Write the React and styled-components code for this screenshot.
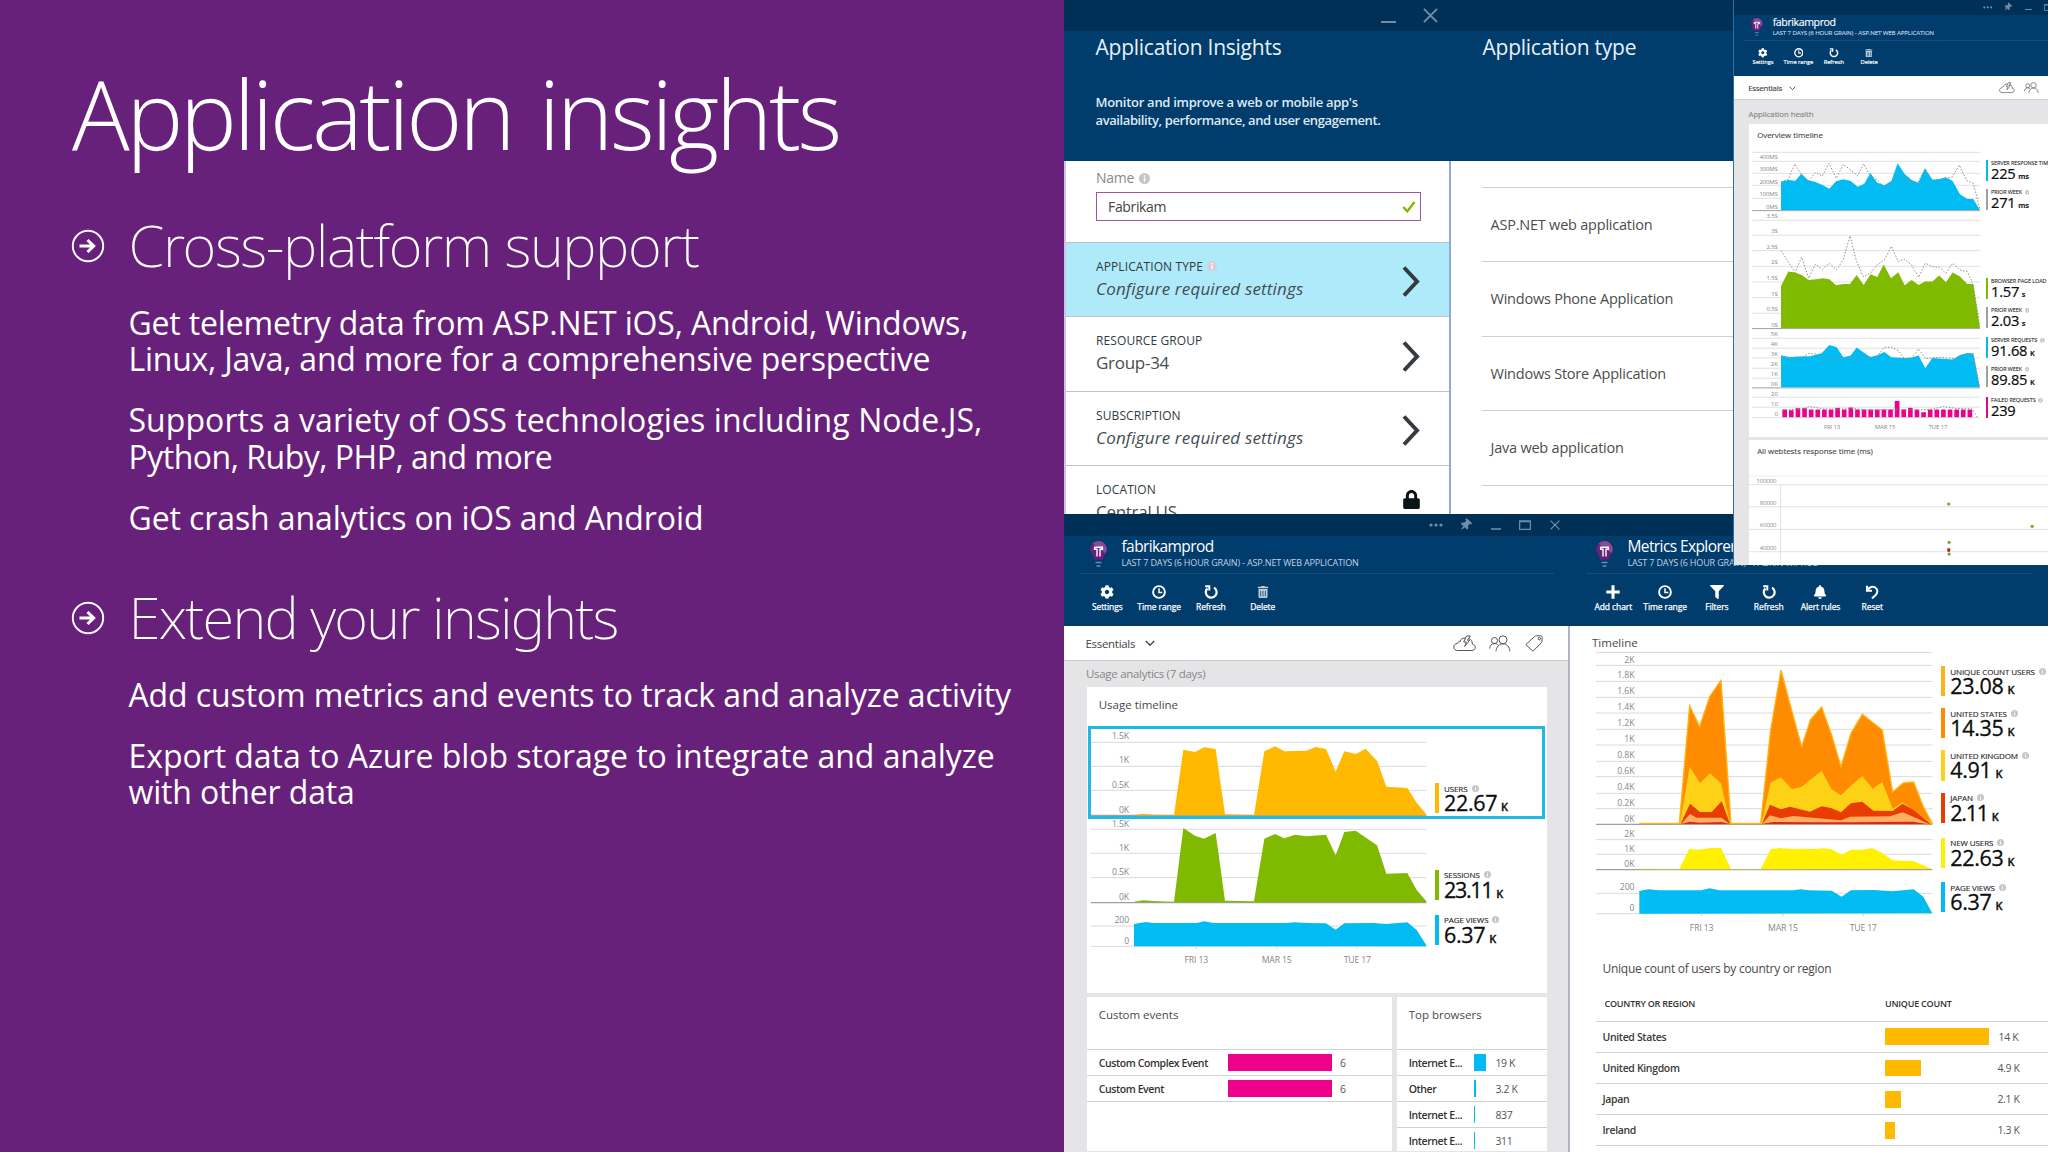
import styled, { createGlobalStyle, css } from "styled-components";
import { FaBell, FaCog, FaFilter, FaLock, FaThumbtack, FaTrashAlt } from "react-icons/fa";

const SANS = `"Open Sans", "Noto Sans", sans-serif`;

const c = {
  purple: "#68217a",
  bar: "#003056",
  header: "#003c6c",
  control: "#6f8ca8",
  amber: "#ffb900",
  green: "#7fba00",
  cyan: "#00bcf2",
  pink: "#ec008c",
  gray: "#a0a0a0",
  body: "#e5e5e7",
  line: "#d2d2d2",
};

/* ---------- data ---------- */

const slideSections = [
  {
    title: "Cross-platform support",
    track: -1.4,
    items: [
      [
        { text: "Get telemetry data from ASP.NET iOS, Android, Windows,", track: -0.18 },
        { text: "Linux, Java, and more for a comprehensive perspective", track: -0.25 },
      ],
      [
        { text: "Supports a variety of OSS technologies including Node.JS,", track: 0.07 },
        { text: "Python, Ruby, PHP, and more", track: -0.5 },
      ],
      [{ text: "Get crash analytics on iOS and Android", track: -0.1 }],
    ],
  },
  {
    title: "Extend your insights",
    track: -1.75,
    items: [
      [{ text: "Add custom metrics and events to track and analyze activity", track: -0.11 }],
      [
        { text: "Export data to Azure blob storage to integrate and analyze", track: -0.05 },
        { text: "with other data", track: -0.15 },
      ],
    ],
  },
];

const settings = [
  { label: "APPLICATION TYPE", value: "Configure required settings", italic: true, active: true, info: true },
  { label: "RESOURCE GROUP", value: "Group-34" },
  { label: "SUBSCRIPTION", value: "Configure required settings", italic: true },
  { label: "LOCATION", value: "Central US", locked: true },
];

const appTypes = [
  "ASP.NET web application",
  "Windows Phone Application",
  "Windows Store Application",
  "Java web application",
  "",
];

const pageViews =
  "222,342 258,336 280,339 410,339 433,334 460,339 680,339 705,337 740,339 798,340 827,359 853,340 940,339 979,342 1042,337 1070,360 1099,406 1099,409 222,409";

const usagePlots = [
  {
    y: 0,
    lines: [[712, "1.5K", 703], [784, "1K", 775], [856, "0.5K", 848], [931, "0K", 923]],
    dark: true,
    areas: [{
      fill: c.amber,
      points: "222,931 222,930 250,926 280,929 342,930 370,734 405,741 432,727 467,732 495,928 582,930 613,739 645,724 673,739 740,737 766,726 798,732 827,800 853,739 888,747 917,731 952,769 979,845 1042,849 1070,893 1099,928 1099,931",
    }],
  },
  {
    y: 915,
    lines: [[58, "1.5K", 50], [130, "1K", 122], [203, "0.5K", 195], [278, "0K", 270]],
    dark: true,
    areas: [{
      fill: c.green,
      points: "222,277 222,275 250,271 280,273 342,275 370,54 405,77 432,86 467,69 495,272 582,274 613,86 645,72 673,85 705,74 740,79 798,74 827,136 853,66 887,62 951,106 979,191 1042,189 1070,240 1099,274 1099,277",
    }],
  },
  {
    y: 915,
    lines: [[348, "200", 340], [409, "0", 402]],
    areas: [{ fill: c.cyan, points: pageViews }],
    ticks: [[409, "FRI 13"], [650, "MAR 15"], [892, "TUE 17"]],
  },
];

const metricPlots = [
  {
    y: 0,
    lines: [
      [457], [496, "2K", 488], [544, "1.8K", 535], [592, "1.6K", 583], [639, "1.4K", 631], [688, "1.2K", 679],
      [735, "1K", 727], [784, "0.8K", 775], [830, "0.6K", 822], [880, "0.4K", 871], [926, "0.2K", 918], [973, "0K", 967],
    ],
    dark: true,
    areas: [
      {
        fill: "#ff8c00",
        stroke: "#fdb515",
        points: "238,970 358,970 389,617 419,680 449,590 483,541 513,970 602,970 632,690 663,510 690,612 725,740 752,658 785,621 815,705 843,800 873,700 907,643 967,690 998,876 1030,849 1061,846 1090,920 1117,971",
      },
      {
        fill: "#fcd116",
        points: "360,971 389,800 420,850 450,820 483,850 511,971 604,971 632,848 663,832 696,868 725,860 785,812 815,868 843,886 875,855 907,828 938,866 967,846 998,926 1028,907 1117,971",
      },
      {
        fill: "#e83c00",
        points: "362,971 390,911 420,936 455,936 485,904 510,971 606,971 630,914 663,928 690,920 750,935 785,919 815,925 843,937 873,910 907,905 940,932 998,933 1028,911 1061,930 1112,971",
      },
      {
        fill: "#ffaf62",
        points: "364,971 390,942 410,953 485,953 508,971 606,971 630,946 663,955 700,948 843,961 870,950 990,949 1028,937 1070,955 1105,971",
      },
      {
        fill: "#dc2626",
        points: "364,972 390,965 420,968 485,966 508,972 606,972 640,966 750,967 870,967 1060,965 1100,972",
      },
    ],
  },
  {
    y: 900,
    lines: [[119, "2K", 111], [163, "1K", 155], [209, "0K", 201]],
    dark: true,
    areas: [{
      fill: "#fff100",
      points: "238,208 238,206 358,207 388,146 415,149 452,144 483,144 513,207 602,207 632,148 660,144 690,147 720,146 765,147 790,145 815,148 845,164 873,149 907,149 937,144 965,158 998,181 1061,184 1090,196 1117,207",
    }],
  },
  {
    y: 900,
    lines: [[280, "200", 271], [341, "0", 333]],
    areas: [{
      fill: c.cyan,
      points: "238,273 265,268 295,271 425,271 449,265 478,271 700,271 722,268 745,271 815,272 845,290 873,271 940,270 998,274 1061,268 1090,290 1117,340 238,341",
    }],
    ticks: [[425, "FRI 13"], [669, "MAR 15"], [910, "TUE 17"]],
  },
];

const failedTops = { 1: 541, 2: 535, 3: 535, 8: 534, 10: 533, 17: 513, 19: 534, 21: 547 };
const failedBars = Array.from({ length: 29 }, (_, i) => ({ x: 157 + i * 19.85, y: failedTops[i] || 539 }));

const healthPlots = [
  {
    y: 0,
    lines: [[457], [484, "400MS", 477], [520, "300MS", 514], [556, "200MS", 551], [595, "100MS", 589], [632, "0MS", 627]],
    dark: true,
    areas: [{
      fill: c.cyan,
      points: "153,545 175,540 196,542 214,521 235,541 256,546 276,554 298,566 318,544 340,538 362,543 383,560 403,551 421,519 442,548 463,556 484,543 503,490 524,522 545,540 565,548 585,505 607,539 628,537 648,532 668,543 690,583 712,597 730,597 750,630 153,630",
    }],
    dotted: "153,546 175,538 194,492 215,525 235,545 256,518 277,528 297,490 319,535 340,493 362,510 383,527 401,491 421,530 442,540 463,560 484,548 503,522 524,538 545,550 565,545 585,507 607,540 628,540 668,530 688,495 710,542 730,550 750,628",
  },
  {
    y: 690,
    lines: [
      [-29, "3.5S", -35], [16, "3S", 10], [62, "2.5S", 58], [109, "2S", 103], [156, "1.5S", 150],
      [203, "1S", 197], [250, "0.5S", 243], [296, "0S", 291],
    ],
    dark: true,
    areas: [{
      fill: c.green,
      points: "153,168 175,125 195,128 215,135 236,150 258,148 279,145 298,148 318,166 340,162 360,162 380,135 401,165 422,133 442,141 461,104 483,145 505,127 524,166 545,150 566,165 585,155 607,155 628,137 648,157 668,128 690,140 712,162 730,162 750,294 153,294",
    }],
    dotted: "153,62 175,95 195,128 215,82 236,145 256,103 277,118 297,100 320,120 340,88 360,18 380,95 400,140 421,130 442,105 463,90 484,49 505,95 522,87 545,105 566,142 586,100 607,110 628,112 648,130 668,100 690,120 712,125 730,165 750,290",
  },
  {
    y: 690,
    lines: [[325, "5K", 318], [355, "4K", 348], [384, "3K", 378], [415, "2K", 408], [445, "1K", 438], [474, "0K", 469]],
    dark: true,
    areas: [{
      fill: c.cyan,
      points: "153,376 178,382 200,380 240,379 275,370 298,345 320,352 340,382 362,377 380,353 401,368 422,382 442,376 463,366 484,382 524,384 545,383 566,377 586,415 607,384 668,389 690,375 712,369 730,371 750,472 153,472",
    }],
    dotted: "153,380 215,384 236,371 258,372 279,386 360,386 401,385 442,378 463,352 484,352 505,362 524,388 545,385 566,357 586,386 628,382 690,388 712,372 730,371 748,470",
  },
  {
    y: 690,
    lines: [[502, "20", 497], [532, "10", 527], [563, "0", 558]],
    bars: failedBars,
    dotted: "157,540 215,538 240,530 280,537 330,538 370,536 420,541 500,538 560,541 610,537 640,530 680,536 727,537 742,562",
    ticks: [[306, "FRI 13"], [465, "MAR 15"], [624, "TUE 17"]],
  },
];

const usageMetrics = [
  { gap: 57, color: c.amber, label: "USERS", value: "22.67", unit: "K" },
  { gap: 56.7, color: c.green, label: "SESSIONS", value: "23.11", unit: "K", tight: true },
  { gap: 14.6, color: c.cyan, label: "PAGE VIEWS", value: "6.37", unit: "K" },
];

const explorerMetrics = [
  { gap: 16, color: "#fdb515", label: "UNIQUE COUNT USERS", value: "23.08", unit: "K" },
  { gap: 11.9, color: "#ff8c00", label: "UNITED STATES", value: "14.35", unit: "K" },
  { gap: 11.9, color: "#fcd116", label: "UNITED KINGDOM", value: "4.91", unit: "K" },
  { gap: 11.9, color: "#e83c00", label: "JAPAN", value: "2.11", unit: "K", tight: true },
  { gap: 15, color: "#fff100", label: "NEW USERS", value: "22.63", unit: "K" },
  { gap: 14, color: c.cyan, label: "PAGE VIEWS", value: "6.37", unit: "K" },
];

const healthMetrics = [
  { gap: 14.6, color: c.cyan, label: "SERVER RESPONSE TIME", value: "225", unit: "ms" },
  { gap: 12.2, color: c.gray, label: "PRIOR WEEK", value: "271", unit: "ms" },
  { gap: 100, color: c.green, label: "BROWSER PAGE LOAD", value: "1.57", unit: "s" },
  { gap: 12.2, color: c.gray, label: "PRIOR WEEK", value: "2.03", unit: "s" },
  { gap: 14, color: c.cyan, label: "SERVER REQUESTS", value: "91.68", unit: "K" },
  { gap: 12, color: c.gray, label: "PRIOR WEEK", value: "89.85", unit: "K" },
  { gap: 14.5, color: c.pink, label: "FAILED REQUESTS", value: "239" },
];

const customEvents = [
  { name: "Custom Complex Event", bar: 103.7, value: "6" },
  { name: "Custom Event", bar: 103.7, value: "6" },
];

const browsers = [
  { name: "Internet E...", bar: 12, value: "19 K" },
  { name: "Other", bar: 1.6, value: "3.2 K" },
  { name: "Internet E...", bar: 1, value: "837" },
  { name: "Internet E...", bar: 1, value: "311" },
];

const countries = [
  { name: "United States", bar: 103.7, value: "14 K" },
  { name: "United Kingdom", bar: 35.7, value: "4.9 K" },
  { name: "Japan", bar: 15.7, value: "2.1 K" },
  { name: "Ireland", bar: 9.7, value: "1.3 K" },
];

/* ---------- icons ---------- */

const ArrowBullet = () => (
  <svg width="34" height="34" viewBox="0 0 34 34" fill="none" stroke="#fff">
    <circle cx="17" cy="17" r="15.2" strokeWidth="1.9" />
    <path d="M8.5 17h14.5M16.500 11l6.200 6-6.200 6" strokeWidth="3" />
  </svg>
);

const Bulb = () => (
  <svg width="17" height="27" viewBox="0 0 17 27">
    <path d="M8.500 0a8.300 8.300 0 0 1 8.300 8.300c0 3.800-3.300 6-3.900 10.200H4.100C3.500 14.300.2 12.100.2 8.300A8.300 8.300 0 0 1 8.500 0z" fill="#68217a" />
    <path d="M8.500 0a8.300 8.300 0 0 1 8.300 8.300c0 1.500-.5 2.700-1.200 3.900L2.500 2.600A8.300 8.300 0 0 1 8.500 0z" fill="#8a4a99" />
    <path d="M7 15.500V8.200H4.600V6.300h7.800v1.900H10v7.300" fill="none" stroke="#fff" strokeWidth="1.400" />
    <path d="M5.500 21.500h6M6.500 25h4" stroke="#6f8ca8" strokeWidth="1.300" />
  </svg>
);

const Clock = () => (
  <svg viewBox="0 0 14 14" fill="none" stroke="#fff">
    <circle cx="7" cy="7" r="5.900" strokeWidth="1.900" />
    <path d="M7 3.200V7.500h3.400" strokeWidth="1.500" />
  </svg>
);

const Refresh = () => (
  <svg viewBox="0 0 14 14" fill="none" stroke="#fff">
    <path d="M10 2.600A5.400 5.400 0 1 1 3.400 3.400" strokeWidth="2.200" />
    <path d="M1.200 1.200H5.300V5.600" strokeWidth="2" />
  </svg>
);

const Reset = () => (
  <svg viewBox="0 0 14 14" fill="none" stroke="#fff" strokeWidth="2.100">
    <path d="M2 0.800V5.800H7" />
    <path d="M2.300 5.200C4.500 1.600 8 1 10.200 2.500c3 2.100 2.800 5.800-.2 8.300L7 13.400" />
  </svg>
);

const Plus = () => (
  <svg viewBox="0 0 14 14" stroke="#fff" strokeWidth="3">
    <path d="M7 .3v13.400M.3 7h13.400" />
  </svg>
);

const Chevron = () => (
  <svg width="19" height="31" viewBox="0 0 19 31" fill="none" stroke="#353b40" strokeWidth="4">
    <path d="M2 1.500l13 14-13 14" />
  </svg>
);

const ChevronDown = () => (
  <svg width="10" height="7" viewBox="0 0 10 7" fill="none" stroke="#444" strokeWidth="1.300">
    <path d="M.8 1l4.200 4.300L9.200 1" />
  </svg>
);

const Check = () => (
  <svg width="14" height="12" viewBox="0 0 14 12" fill="none" stroke="#85b800" strokeWidth="2.400">
    <path d="M1.300 6l4 4.300L12.500 1" />
  </svg>
);

const CloudBolt = () => (
  <svg width="23" height="17" viewBox="0 0 23 17" fill="none" stroke="#555" strokeWidth="1">
    <path d="M4.500 15.500h14.300c2.200 0 3.500-1.500 3.500-3.200 0-1.800-1.200-3-3-3.100.2-3-1.300-5-3.500-5.800M12.500 3.300C9.800 2.500 7.500 4 7 6.800 5.800 6.300 4.700 7 4.600 8.400 2.200 8.500.8 10 .8 12c0 2 1.500 3.500 3.700 3.500" />
    <path d="M13.500 1l-2.800 6h2.700l-1.700 4.500 5-6.300h-2.400L17.500 1z" />
  </svg>
);

const People = () => (
  <svg width="22" height="17" viewBox="0 0 22 17" fill="none" stroke="#555" strokeWidth="1">
    <circle cx="5.500" cy="5.500" r="3" />
    <circle cx="14" cy="4.800" r="4" />
    <path d="M.6 13.500c.3-3 2-5 4.900-5 1.600 0 2.700.6 3.500 1.700M7 16.300c.3-4.300 2.900-7.500 7-7.500s6.500 3.200 6.800 7.500" />
  </svg>
);

const Tag = () => (
  <svg width="18" height="17" viewBox="0 0 18 17" fill="none" stroke="#555" strokeWidth="1">
    <path d="M.9 9.600L9.700 1.400c.5-.4 1-.6 1.600-.6h4.500c.9 0 1.500.7 1.400 1.600l-.3 4c0 .5-.3 1-.6 1.400L8 16.200z" />
    <circle cx="14.300" cy="3.600" r="1.200" />
  </svg>
);

const CloseIcon = ({ size }) => (
  <svg width={size} height={size} viewBox="0 0 10 10" stroke={c.control} strokeWidth="1.300">
    <path d="M.6.6l8.800 8.800M9.400.6L.6 9.400" />
  </svg>
);

/* ---------- charts ---------- */

const ChartStack = ({ plots, viewBox, width, height, from, to, labelX, font, pen }) => (
  <Plot width={width} height={height} viewBox={viewBox}>
    {plots.map((p, i) => (
      <g key={i} transform={`translate(0 ${p.y})`}>
        {p.lines.map(([y, label, ly], n) => (
          <g key={y}>
            <path
              d={`M${from} ${y}H${to}`}
              stroke={p.dark && n === p.lines.length - 1 ? "#a0a0a0" : "#d0d0d0"}
              strokeWidth={p.dark && n === p.lines.length - 1 ? pen * 1.5 : pen}
            />
            {label && <text x={labelX} y={ly} fontSize={font} textAnchor="end">{label}</text>}
          </g>
        ))}
        {p.areas?.map((a) => (
          <polygon key={a.fill} points={a.points} fill={a.fill} stroke={a.stroke || "none"} strokeWidth="4" />
        ))}
        {p.bars?.map((b) => (
          <rect key={b.x} x={b.x} y={b.y} width="14" height={562 - b.y} fill={c.pink} />
        ))}
        {p.dotted && <polyline points={p.dotted} fill="none" stroke="#8f8f8f" strokeWidth="3" strokeDasharray="4.500 5" />}
        {p.ticks?.map(([x, label]) => {
          const base = p.lines[p.lines.length - 1][0];
          return (
            <g key={label}>
              <path d={`M${x} ${base}v${font * 0.3}`} stroke="#c4c4c4" strokeWidth={pen} />
              <text x={x} y={base + font * 1.98} fontSize={font} textAnchor="middle">{label}</text>
            </g>
          );
        })}
      </g>
    ))}
  </Plot>
);

const WebtestScatter = () => (
  <Plot width="438" height="147" viewBox="57 710 897 301">
    <path d="M57 737H954" stroke="#e6e6e6" strokeWidth="2" />
    {[[763, "100000"], [829, "80000"], [897, "60000"], [964, "40000"]].map(([y, label]) => (
      <g key={y}>
        <path d={`M57 ${y}H954`} stroke="#d3d3d3" strokeWidth="2" />
        <text x="139" y={y - 6} fontSize="18" textAnchor="end">{label}</text>
      </g>
    ))}
    <path d="M152 763V1011" stroke="#d3d3d3" strokeWidth="2" />
    {[[656, 821], [906, 888], [657, 936], [657, 971]].map(([x, y]) => (
      <circle key={y} cx={x} cy={y} r="4.800" fill="#76a91d" />
    ))}
    <ellipse cx="656" cy="959" rx="5" ry="6" fill="#d0103a" />
  </Plot>
);

const InfoDot = ({ size = 7, tone = "#c6c6c8" }) => (
  <svg width={size} height={size} viewBox="0 0 10 10">
    <circle cx="5" cy="5" r="5" fill={tone} />
    <path d="M5 4.200V8M5 2v1.400" stroke="#fff" strokeWidth="1.300" />
  </svg>
);

const MetricList = ({ items }) => (
  <Metrics>
    {items.map((m, i) => (
      <Metric key={i} $gap={m.gap} $color={m.color}>
        <MetricLabel>{m.label}<InfoDot /></MetricLabel>
        <MetricValue $tight={m.tight}>{m.value}<Unit>{m.unit}</Unit></MetricValue>
      </Metric>
    ))}
  </Metrics>
);

/* ---------- blades ---------- */

const BladeTop = ({ title, subtitle, tools, controls }) => (
  <>
    <TitleBar>
      {controls && (
        <>
          <Control><svg width="14" height="4" viewBox="0 0 14 4" fill={c.control}><circle cx="2" cy="2" r="1.600" /><circle cx="7" cy="2" r="1.600" /><circle cx="12" cy="2" r="1.600" /></svg></Control>
          <Control><Pin /></Control>
          <Control><svg width="10" height="9" viewBox="0 0 10 9"><path d="M0 8h10" stroke={c.control} strokeWidth="1.500" /></svg></Control>
          <Control><svg width="12" height="10" viewBox="0 0 12 10"><path d="M.6 1h10.800v8.400H.6zM0 1.500h12" fill="none" stroke={c.control} strokeWidth="1.300" /></svg></Control>
          <Control><CloseIcon size={10} /></Control>
        </>
      )}
    </TitleBar>
    <Header>
      <TitleRow>
        <Bulb />
        <div>
          <BladeTitle>{title}</BladeTitle>
          <BladeSubtitle>{subtitle}</BladeSubtitle>
        </div>
      </TitleRow>
      <Toolbar>
        {tools.map(([label, icon, dim]) => (
          <Tool key={label} $dim={dim}>{icon}{label}</Tool>
        ))}
      </Toolbar>
    </Header>
  </>
);

const appTools = [
  ["Settings", <FaCog />],
  ["Time range", <Clock />],
  ["Refresh", <Refresh />],
  ["Delete", <FaTrashAlt />, true],
];

const explorerTools = [
  ["Add chart", <Plus />],
  ["Time range", <Clock />],
  ["Filters", <FaFilter />],
  ["Refresh", <Refresh />],
  ["Alert rules", <FaBell />],
  ["Reset", <Reset />],
];

const EssentialsBar = () => (
  <Essentials>
    Essentials
    <ChevronDown />
    <EssentialsIcons><CloudBolt /><People /><Tag /></EssentialsIcons>
  </Essentials>
);

const AppBlade = ({ section, roomy, children }) => (
  <Blade>
    <BladeTop
      controls
      title="fabrikamprod"
      subtitle="LAST 7 DAYS (6 HOUR GRAIN) - ASP.NET WEB APPLICATION"
      tools={appTools}
    />
    <BladeBody>
      <EssentialsBar />
      <SectionLabel $roomy={roomy}>{section}</SectionLabel>
      {children}
    </BladeBody>
  </Blade>
);

const BarTable = ({ rows, color, nameWidth, barWidth, pad }) => (
  <div>
    {rows.map((r, i) => (
      <BarRow key={i} $name={nameWidth} $bar={barWidth} $pad={pad}>
        <b>{r.name}</b>
        <Bar $color={color} $width={r.bar} />
        <span>{r.value}</span>
      </BarRow>
    ))}
  </div>
);

const App = () => {
  return (
    <Page>
      <GlobalStyle />
      <Slide>
        <SlideTitle>Application insights</SlideTitle>
        {slideSections.map((s) => (
          <SlideSection key={s.title}>
            <ArrowBullet />
            <SlideHeading $track={s.track}>{s.title}</SlideHeading>
            {s.items.map((lines) => (
              <SlideText key={lines[0].text}>
                {lines.map((l) => <SlideLine key={l.text} $track={l.track}>{l.text}</SlideLine>)}
              </SlideText>
            ))}
          </SlideSection>
        ))}
      </Slide>

      <Shots>
        <CreatePane>
          <CreateBlade>
            <CreateBar>
              <svg width="15" height="14" viewBox="0 0 15 14"><path d="M0 13h15" stroke={c.control} strokeWidth="2" /></svg>
              <CloseIcon size={15} />
            </CreateBar>
            <CreateHeader>
              <CreateTitle>Application Insights</CreateTitle>
              <Description>Monitor and improve a web or mobile app's</Description>
              <Description $tight>availability, performance, and user engagement.</Description>
            </CreateHeader>
            <Form>
              <NameField>
                <FieldLabel>Name<InfoDot size={11} /></FieldLabel>
                <NameInput>Fabrikam<Check /></NameInput>
              </NameField>
              {settings.map((s) => (
                <Setting key={s.label} $active={s.active}>
                  <div>
                    <SettingLabel>{s.label}{s.info && <InfoDot size={10} tone="#d9cdd8" />}</SettingLabel>
                    <SettingValue $italic={s.italic}>{s.value}</SettingValue>
                  </div>
                  {s.locked ? <Lock /> : <Chevron />}
                </Setting>
              ))}
            </Form>
          </CreateBlade>
          <TypeBlade>
            <CreateBar />
            <CreateHeader>
              <CreateTitle>Application type</CreateTitle>
            </CreateHeader>
            <TypeList>
              {appTypes.map((t) => <TypeItem key={t}>{t}</TypeItem>)}
            </TypeList>
          </TypeBlade>
        </CreatePane>

        <Dashboard>
          <AppBlade section="Usage analytics (7 days)">
            <Card $height={306}>
              <CardTitle>Usage timeline</CardTitle>
              <ChartRow $left={3}>
                <ChartStack plots={usagePlots} viewBox="90 663 1011 771" width="337" height="257" from={92} to={1099} labelX={207} font={26} pen={2.4} />
                <MetricList items={usageMetrics} />
                <Selection />
              </ChartRow>
            </Card>
            <CardRow>
              <Card $width={305} $height={153.5}>
                <CardTitle $tall>Custom events</CardTitle>
                <BarTable rows={customEvents} color={c.pink} nameWidth={129.3} barWidth={112} pad={11.7} />
              </Card>
              <Card $width={150} $height={153.5}>
                <CardTitle $tall>Top browsers</CardTitle>
                <BarTable rows={browsers} color={c.cyan} nameWidth={65.3} barWidth={21.500} pad={11.7} />
              </Card>
            </CardRow>
          </AppBlade>

          <ExplorerBlade>
            <BladeTop
              title="Metrics Explorer"
              subtitle="LAST 7 DAYS (6 HOUR GRAIN) - FABRIKAMPROD"
              tools={explorerTools}
            />
            <ExplorerBody>
              <ExplorerTitle>Timeline</ExplorerTitle>
              <ChartRow $left={26}>
                <ChartStack plots={metricPlots} viewBox="108 450 1012 870" width="337.3" height="290" from={108} to={1117} labelX={223} font={26} pen={2.4} />
                <MetricList items={explorerMetrics} />
              </ChartRow>
              <RegionTitle>Unique count of users by country or region</RegionTitle>
              <RegionTable>
                <RegionHead><span>COUNTRY OR REGION</span><span>UNIQUE COUNT</span></RegionHead>
                {countries.map((r) => (
                  <RegionRow key={r.name}>
                    <b>{r.name}</b>
                    <Bar $color={c.amber} $width={r.bar} />
                    <RegionValue>{r.value}</RegionValue>
                  </RegionRow>
                ))}
              </RegionTable>
            </ExplorerBody>
          </ExplorerBlade>
        </Dashboard>

        <HealthWindow>
          <Scaled>
            <AppBlade section="Application health" roomy>
              <Card $height={459.3}>
                <CardTitle>Overview timeline</CardTitle>
                <ChartRow $left={4.4}>
                  <ChartStack plots={healthPlots} viewBox="66 450 684 861" width="333.8" height="420" from={66} to={750} labelX={143} font={18} pen={2} />
                  <MetricList items={healthMetrics} />
                </ChartRow>
              </Card>
              <CardRow>
                <Card $height={200}>
                  <CardTitle>All webtests response time (ms)</CardTitle>
                  <WebtestScatter />
                </Card>
              </CardRow>
            </AppBlade>
          </Scaled>
        </HealthWindow>
      </Shots>
    </Page>
  );
};

export default App;

/* ---------- styles ---------- */

const GlobalStyle = createGlobalStyle`
    * { box-sizing: border-box; }
    body {
        margin: 0;
        font-family: ${SANS};
        overflow: hidden;
    }
    svg { display: block; flex: none; }
`

const Page = styled.div`
    width: 2048px;
    height: 1152px;
    display: flex;
    overflow: hidden;
    background: #fff;
`

const Slide = styled.section`
    width: 1064px;
    padding: 53px 0 0 70.5px;
    background: ${c.purple};
    color: #fff;
    white-space: nowrap;
`

const SlideTitle = styled.h1`
    margin: 0 0 37px 1.5px;
    font-size: 96px;
    font-weight: 300;
    line-height: 120px;
    letter-spacing: -3.5px;
    word-spacing: 5px;
`

const SlideSection = styled.div`
    display: grid;
    grid-template-columns: 58px 1fr;
    align-items: center;
    margin-bottom: 45.5px;

    > p { grid-column: 2; }
    > svg { margin-top: 2px; }
`

const SlideHeading = styled.h2`
    margin: 0;
    font-family: "Noto Sans", ${SANS};
    font-size: 58px;
    font-weight: 200;
    line-height: 70px;
    letter-spacing: ${({ $track }) => $track}px;
`

const SlideText = styled.p`
    margin: 25px 0 0;
    font-size: 32px;
    line-height: 36.2px;
`

const SlideLine = styled.span`
    display: block;
    letter-spacing: ${({ $track }) => $track}px;
`

const Shots = styled.section`
    position: relative;
    width: 984px;
    display: flex;
    flex-direction: column;
    overflow: hidden;
    white-space: nowrap;
`

const CreatePane = styled.div`
    height: 514px;
    display: flex;
    overflow: hidden;
    color: #fff;
`

const CreateBlade = styled.div`
    width: 387px;
`

const TypeBlade = styled.div`
    flex: 1;
`

const CreateBar = styled.div`
    height: 31px;
    display: flex;
    justify-content: flex-end;
    align-items: center;
    gap: 27px;
    padding-right: 13px;
    background: ${c.bar};
`

const CreateHeader = styled.header`
    height: 130px;
    padding: 2px 0 0 31.5px;
    background: ${c.header};
`

const CreateTitle = styled.h3`
    margin: 0 0 33px;
    color: #e8f0f7;
    font-size: 21px;
    font-weight: 400;
    line-height: 28px;
    letter-spacing: -0.25px;
`

const Description = styled.p`
    margin: 0;
    color: #dfe9f2;
    font-size: 13px;
    font-weight: 600;
    line-height: 17.7px;
    letter-spacing: ${({ $tight }) => ($tight ? -0.4 : -0.28)}px;
`

const Form = styled.div`
    height: 353px;
    overflow: hidden;
    background: #fff;
    border-left: 2px solid #c9c6e0;
    border-right: 2px solid #93a9d2;
`

const NameField = styled.div`
    height: 80.5px;
    padding: 7px 0 0 30px;
`

const FieldLabel = styled.div`
    display: flex;
    align-items: center;
    gap: 5px;
    margin-bottom: 4px;
    color: #8a8a8a;
    font-size: 14px;
    line-height: 20px;
    letter-spacing: -0.3px;
`

const NameInput = styled.div`
    width: 325px;
    height: 29px;
    display: flex;
    align-items: center;
    justify-content: space-between;
    padding: 0 4px 0 11px;
    border: 1px solid #a3539f;
    color: #444;
    font-size: 14px;
    letter-spacing: -0.35px;
`

const Setting = styled.div`
    height: 74.5px;
    display: flex;
    justify-content: space-between;
    align-items: flex-start;
    padding: 15px 28px 0 30px;
    border-top: 1.5px solid #bfc3c8;
    background: ${({ $active }) => ($active ? "#aeeaf9" : "#fff")};

    > svg { margin-top: 8.5px; }
`

const SettingLabel = styled.div`
    display: flex;
    align-items: center;
    gap: 4px;
    color: #2f3a40;
    font-size: 12px;
    line-height: 17px;
    letter-spacing: 0.1px;
`

const SettingValue = styled.div`
    color: #454d52;
    font-size: 17px;
    font-style: ${({ $italic }) => ($italic ? "italic" : "normal")};
    line-height: 28.5px;
    letter-spacing: ${({ $italic }) => ($italic ? 0.17 : -0.28)}px;
`

const Lock = styled(FaLock)`
    width: 17px;
    height: 19px;
    margin-right: 1.5px;
    color: #0b1418;
`

const TypeList = styled.div`
    height: 353px;
    padding: 25.5px 0 0 31px;
    overflow: hidden;
    background: #fff;
`

const TypeItem = styled.div`
    height: 74.5px;
    padding-left: 8.5px;
    border-top: 1.5px solid #cfcfcf;
    color: #4d4d4d;
    font-size: 14.5px;
    line-height: 74px;
    letter-spacing: -0.22px;
`

const Dashboard = styled.div`
    flex: 1;
    display: flex;
    overflow: hidden;
`

const HealthWindow = styled.div`
    position: absolute;
    top: 0;
    left: 669px;
    width: 315px;
    height: 564.5px;
    overflow: hidden;
    border-left: 1px solid #2f6ea5;
    background: ${c.body};
`

const Scaled = styled.div`
    zoom: 0.683;
    margin-left: -0.8px;
    -webkit-text-stroke: 0.2px;
`

const Blade = styled.div`
    width: 506px;
    display: flex;
    flex: none;
    flex-direction: column;
`

const ExplorerBlade = styled(Blade)`
    width: 478px;
`

const TitleBar = styled.div`
    height: 22px;
    display: flex;
    justify-content: flex-end;
    background: ${c.bar};
`

const Control = styled.span`
    width: 29.8px;
    display: flex;
    align-items: center;
    justify-content: center;
`

const Pin = styled(FaThumbtack)`
    width: 11px;
    height: 12px;
    color: ${c.control};
    transform: rotate(42deg);
`

const Header = styled.header`
    height: 90px;
    background: ${c.header};
    color: #fff;
`

const TitleRow = styled.div`
    height: 38px;
    display: flex;
    gap: 14.5px;
    margin: 0 16px;
    padding-left: 10px;
    border-bottom: 1px solid #1a4c7a;

    > svg { margin-top: 5px; }
`

const BladeTitle = styled.h3`
    margin: 0;
    font-size: 15.5px;
    font-weight: 400;
    line-height: 21px;
    letter-spacing: -0.6px;
`

const BladeSubtitle = styled.div`
    color: #c3d2e0;
    font-size: 9px;
    line-height: 12px;
    letter-spacing: -0.16px;
`

const Toolbar = styled.div`
    display: flex;
    padding: 10.5px 0 0 17.4px;
`

const Tool = styled.div`
    width: 51.8px;
    display: flex;
    flex-direction: column;
    align-items: center;
    font-size: 8.5px;
    line-height: 13px;
    letter-spacing: -0.1px;
    -webkit-text-stroke: 0.25px #fff;

    svg {
        width: 14px;
        height: 14px;
        margin-bottom: 1px;
        opacity: ${({ $dim }) => ($dim ? 0.75 : 1)};
        ${({ $dim }) => $dim && css`height: 12px; margin: 1px 0 2px;`}
    }
`

const BladeBody = styled.div`
    flex: 1;
    border-right: 2px solid #b3b1cc;
    background: ${c.body};
`

const Essentials = styled.div`
    height: 35px;
    display: flex;
    align-items: center;
    gap: 10px;
    padding: 0 25.5px 0 21.5px;
    border-bottom: 1px solid #cfcfd2;
    background: #fff;
    color: #444;
    font-size: 11.5px;
    letter-spacing: -0.3px;
`

const EssentialsIcons = styled.div`
    display: flex;
    align-items: center;
    gap: 13.5px;
    margin-left: auto;
`

const SectionLabel = styled.div`
    padding: ${({ $roomy }) => ($roomy ? 8 : 0)}px 0 0 22px;
    color: #868686;
    font-size: 11.5px;
    line-height: 26px;
    letter-spacing: ${({ $roomy }) => ($roomy ? -0.1 : -0.3)}px;
`

const Card = styled.div`
    width: ${({ $width }) => $width || 460}px;
    height: ${({ $height }) => $height}px;
    margin-left: 23px;
    background: #fff;
`

const CardRow = styled.div`
    display: flex;
    gap: 5px;
    margin: 4.3px 0 0 23px;

    > ${Card} { margin-left: 0; }
`

const CardTitle = styled.h4`
    height: ${({ $tall }) => ($tall ? 52 : 39)}px;
    margin: 0;
    padding-left: 11.7px;
    color: #4a4a4a;
    font-size: 11.5px;
    font-weight: 400;
    line-height: 35px;
`

const ChartRow = styled.div`
    position: relative;
    display: flex;
    padding-left: ${({ $left }) => $left}px;
`

const Plot = styled.svg`
    fill: #868686;
    font-family: ${SANS};
    letter-spacing: -0.4px;
    -webkit-text-stroke: 0;
`

const Selection = styled.div`
    position: absolute;
    top: 0;
    left: 1px;
    width: 457px;
    height: 93px;
    border: 3px solid #1fb9e6;
`

const Metrics = styled.div`
    margin-left: 8px;
`

const Metric = styled.div`
    height: 30.3px;
    margin-top: ${({ $gap }) => $gap}px;
    padding-left: 5px;
    border-left: 4.300px solid ${({ $color }) => $color};
`

const MetricLabel = styled.div`
    display: flex;
    align-items: center;
    gap: 4px;
    height: 10px;
    color: #2c2c2c;
    font-size: 8px;
    line-height: 11px;
    letter-spacing: -0.1px;
    -webkit-text-stroke: 0.15px;
`

const MetricValue = styled.div`
    color: #0c0c0c;
    font-size: 21.5px;
    line-height: 20px;
    letter-spacing: ${({ $tight }) => ($tight ? -1.3 : -0.35)}px;
    -webkit-text-stroke: 0.3px;
`

const Unit = styled.span`
    margin-left: 4px;
    font-size: 11px;
    font-weight: 600;
    letter-spacing: 0;
`

const BarRow = styled.div`
    height: 26px;
    display: grid;
    grid-template-columns: ${({ $name, $bar }) => `${$name}px ${$bar}px 1fr`};
    align-items: center;
    padding-left: ${({ $pad }) => $pad}px;
    border-top: 1px solid ${c.line};
    color: #555;
    font-size: 10.5px;
    letter-spacing: -0.4px;

    &:last-child { box-shadow: 0 1px 0 ${c.line}; }

    b {
        color: #333;
        font-weight: 600;
    }
`

const Bar = styled.div`
    width: ${({ $width }) => $width}px;
    height: 16.7px;
    background: ${({ $color }) => $color};
`

const ExplorerBody = styled.div`
    flex: 1;
    background: #fff;
`

const ExplorerTitle = styled.h4`
    height: 24px;
    margin: 0;
    padding-left: 22px;
    color: #4a4a4a;
    font-size: 11.5px;
    font-weight: 400;
    line-height: 33px;
`

const RegionTitle = styled.h4`
    margin: 19px 0 0 32.5px;
    color: #4a4a4a;
    font-size: 12px;
    font-weight: 400;
    line-height: 20px;
    letter-spacing: -0.27px;
`

const RegionTable = styled.div`
    margin-left: 26px;
    border-bottom: 1px solid ${c.line};
`

const RegionHead = styled.div`
    height: 41.7px;
    display: grid;
    grid-template-columns: 280.500px 1fr;
    padding-left: 8.5px;
    color: #333;
    font-size: 9px;
    font-weight: 600;
    line-height: 49px;
    letter-spacing: -0.22px;
`

const RegionRow = styled.div`
    height: 31.2px;
    display: grid;
    grid-template-columns: 282.500px 104px 39px;
    align-items: center;
    padding-left: 6.500px;
    border-top: 1px solid ${c.line};
    color: #555;
    font-size: 10.5px;
    letter-spacing: -0.35px;

    b {
        color: #3a3a3a;
        font-weight: 600;
    }
`

const RegionValue = styled.span`
    text-align: center;
`
